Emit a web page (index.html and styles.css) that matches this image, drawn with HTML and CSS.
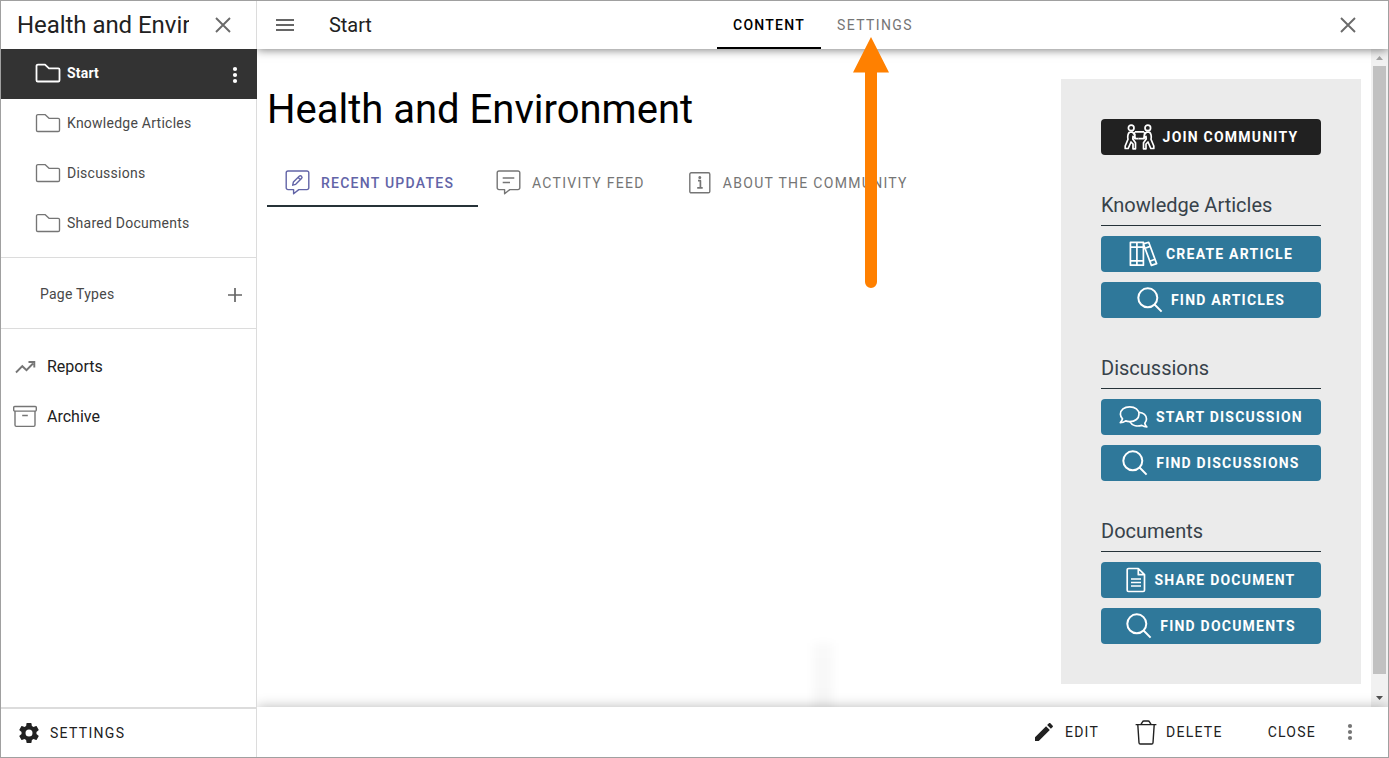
FILE: index.html
```html
<!DOCTYPE html>
<html lang="en">
<head>
<meta charset="utf-8">
<title>Health and Environment</title>
<link rel="stylesheet" href="styles.css">
</head>
<body>
<svg width="0" height="0" class="defs">
  <symbol id="folder" viewBox="0 0 26 20"><path d="M3 1.6h7l4 3.7h9.2a1.3 1.3 0 0 1 1.3 1.3v10.6a1.3 1.3 0 0 1-1.3 1.3H2.8a1.3 1.3 0 0 1-1.3-1.3V3a1.4 1.4 0 0 1 1.5-1.4z"/></symbol>
  <symbol id="close" viewBox="0 0 16 16"><path d="M1 1l14 14M15 1L1 15"/></symbol>
  <symbol id="search" viewBox="0 0 26 26"><circle cx="10.8" cy="10.8" r="9.5"/><path d="M17.3 17.3l7.3 7.3"/></symbol>
  <symbol id="dots" viewBox="0 0 6 18"><circle cx="3" cy="3" r="2.1"/><circle cx="3" cy="9" r="2.1"/><circle cx="3" cy="15" r="2.1"/></symbol>
</svg>
<div class="frame">
  <aside class="sidebar">
    <header class="side-head">
      <div class="side-title">Health and Environment</div>
      <svg class="line close" width="16" height="16"><use href="#close"/></svg>
    </header>
    <nav class="tree">
      <a class="node active"><svg class="line" width="26" height="20"><use href="#folder"/></svg><span>Start</span><svg class="dots" width="6" height="18"><use href="#dots"/></svg></a>
      <a class="node"><svg class="line" width="26" height="20"><use href="#folder"/></svg><span>Knowledge Articles</span></a>
      <a class="node"><svg class="line" width="26" height="20"><use href="#folder"/></svg><span>Discussions</span></a>
      <a class="node"><svg class="line" width="26" height="20"><use href="#folder"/></svg><span>Shared Documents</span></a>
    </nav>
    <div class="types"><span>Page Types</span><svg class="line" width="16" height="16" viewBox="0 0 16 16"><path d="M8 1v14M1 8h14"/></svg></div>
    <nav class="links">
      <a><svg class="line trend" width="24" height="24" viewBox="0 0 24 24"><path d="M3 18.500l6.300-6.300 4.200 4L20 9.500M15.500 8h5.800v5.500"/></svg><span>Reports</span></a>
      <a><svg class="line thin" width="24" height="22" viewBox="0 0 24 22"><rect x=".7" y="1.500" width="22.600" height="4.600" rx="1"/><path d="M2 6.100v14a1.300 1.300 0 0 0 1.300 1.300h17.400a1.300 1.300 0 0 0 1.300-1.300v-14M9.200 10.500h5.600"/></svg><span>Archive</span></a>
    </nav>
    <footer class="side-foot">
      <svg width="24" height="24" viewBox="0 0 24 24"><path d="M12 15.5A3.5 3.5 0 0 1 8.5 12 3.5 3.5 0 0 1 12 8.5a3.5 3.5 0 0 1 3.5 3.5 3.5 3.5 0 0 1-3.5 3.5m7.43-2.53c.04-.32.07-.64.07-.97s-.03-.66-.07-1l2.11-1.63c.19-.15.24-.42.12-.64l-2-3.46c-.12-.22-.39-.31-.61-.22l-2.49 1c-.52-.39-1.06-.73-1.69-.98l-.37-2.65A.506.506 0 0 0 14 2h-4c-.25 0-.46.18-.5.42l-.37 2.65c-.63.25-1.17.59-1.69.98l-2.49-1c-.22-.09-.49 0-.61.22l-2 3.46c-.13.22-.07.49.12.64L4.57 11c-.04.34-.07.67-.07 1s.03.65.07.97l-2.11 1.66c-.19.15-.25.42-.12.64l2 3.46c.12.22.39.3.61.22l2.49-1.01c.52.4 1.06.74 1.69.99l.37 2.65c.04.24.25.42.5.42h4c.25 0 .46-.18.5-.42l.37-2.65c.63-.26 1.17-.59 1.69-.99l2.49 1.01c.22.08.49 0 .61-.22l2-3.46c.12-.22.07-.49-.12-.64z"/></svg>
      <span>SETTINGS</span>
    </footer>
  </aside>
  <main class="main">
    <header class="topbar">
      <svg class="line menu" width="18" height="14" viewBox="0 0 18 14"><path d="M0 2h18M0 7h18M0 12h18"/></svg>
      <span class="page-name">Start</span>
      <nav class="modes"><a class="mode current">CONTENT</a><a class="mode">SETTINGS</a></nav>
      <svg class="line close" width="16" height="16"><use href="#close"/></svg>
    </header>
    <div class="body">
      <section class="content">
        <h1>Health and Environment</h1>
        <nav class="tabs">
          <a class="tab selected"><svg class="line thin" width="25" height="25" viewBox="0 0 25 25"><path d="M3 1h19a1.8 1.8 0 0 1 1.8 1.8v15A1.8 1.8 0 0 1 22 19.6h-8.2L8.6 23.8v-4.2H3a1.8 1.8 0 0 1-1.8-1.8v-15A1.8 1.8 0 0 1 3 1z"/><path d="M7.700 15.200l.7-3.200 5.800-5.800a1.600 1.600 0 0 1 2.300 2.300l-5.800 5.800zM13 7.300l2.400 2.400"/></svg><span>RECENT UPDATES</span></a>
          <a class="tab"><svg class="line thin" width="25" height="25" viewBox="0 0 25 25"><path d="M3 1h19a1.8 1.8 0 0 1 1.8 1.8v15A1.8 1.8 0 0 1 22 19.6h-8.2L8.6 23.8v-4.2H3a1.8 1.8 0 0 1-1.8-1.8v-15A1.8 1.8 0 0 1 3 1z"/><path d="M6.700 8h11.600M6.700 12.500h7.300"/></svg><span>ACTIVITY FEED</span></a>
          <a class="tab info"><svg class="line thin" width="22" height="22" viewBox="0 0 22 22"><rect x=".8" y=".8" width="20" height="20" rx="1.4"/><path d="M9 8.700h2.400v6.900M8.200 15.900h5.500" stroke-width="1.7"/><circle cx="10.800" cy="5.600" r=".8" fill="currentColor"/></svg><span>ABOUT THE COMMUNITY</span></a>
        </nav>
      </section>
      <aside class="panel">
        <a class="btn dark"><svg class="line join" width="31" height="26" viewBox="0 0 31 26"><circle cx="7.2" cy="3.9" r="2.8"/><path d="M5.5 8.2c-1.400 1-2.300 4.500-1.500 7L1.200 22v2.500h3L7 18l2 2v4.800h2.500V18.700L8.800 15l.2-2.600 2.200 2.300h3.300M5.500 8.200h3l2.800 3.300M11 7.800h9"/><circle cx="23.800" cy="3.900" r="2.800"/><path d="M25.500 8.200c1.400 1 2.300 4.500 1.500 7l2.800 6.800v2.500h-3L24 18l-2 2v4.800h-2.500V18.700L22.200 15l-.2-2.600-2.200 2.300h-5.300M25.500 8.200h-3l-2.800 3.300M11.200 14.700l-1-6.900M19.800 14.700l1-6.900"/></svg><span>JOIN COMMUNITY</span></a>
        <h2>Knowledge Articles</h2>
        <a class="btn"><svg class="line" width="29" height="26" viewBox="0 0 29 26"><path d="M1.4 1.4h13v22.8h-13zM7.900 1.400v22.800M1.400 6.200h13M1.400 19.800h13M14.400 2.900l5.300-1.600 7.900 21.300-5.200 1.800-7.900-21.200M16 7.200l5.200-1.800M20.800 20.200l5.200-1.900"/></svg><span>CREATE ARTICLE</span></a>
        <a class="btn"><svg class="line glass" width="26" height="26"><use href="#search"/></svg><span>FIND ARTICLES</span></a>
        <h2>Discussions</h2>
        <a class="btn"><svg class="line" width="29" height="24" viewBox="0 0 29 24"><path d="M10.700 1.800c5.500 0 9.300 3.200 9.300 7.400s-3.800 7.400-9.300 7.400c-1.500 0-2.800-.2-4-.7-1.600 1.100-3.500 1.700-5.400 1.700 1.100-1 1.900-2.500 2.200-3.800A7 7 0 0 1 1.400 9.200c0-4.200 3.800-7.400 9.300-7.400z"/><path d="M20 7.300c4.500.4 7.500 3.100 7.500 6.800 0 1.600-.7 3-1.700 4.200.3 1.300 1 2.900 2 3.700-1.800 0-3.500-.6-5-1.600-5.200 1.400-10-.1-11.900-3.800"/></svg><span>START DISCUSSION</span></a>
        <a class="btn"><svg class="line glass" width="26" height="26"><use href="#search"/></svg><span>FIND DISCUSSIONS</span></a>
        <h2>Documents</h2>
        <a class="btn"><svg class="line" width="20" height="26" viewBox="0 0 20 26"><path d="M2.500 1.500h9.800l6.200 6.200v15.500a1.300 1.300 0 0 1-1.300 1.300H2.500a1.300 1.300 0 0 1-1.300-1.300V2.800a1.300 1.300 0 0 1 1.300-1.300zM12.300 1.500v6.200h6.200M5 12h10M5 15.500h10M5 19h10"/></svg><span>SHARE DOCUMENT</span></a>
        <a class="btn"><svg class="line glass" width="26" height="26"><use href="#search"/></svg><span>FIND DOCUMENTS</span></a>
      </aside>
      <div class="scrollbar">
        <svg width="7" height="4" viewBox="0 0 7 4"><path d="M3.500 0L7 4H0z" fill="#a3a3a3"/></svg>
        <div class="thumb"></div>
        <svg width="7" height="4" viewBox="0 0 7 4"><path d="M0 0h7L3.500 4z" fill="#505050"/></svg>
      </div>
      <div class="smudge"></div>
    </div>
    <footer class="actions">
      <a class="edit"><svg width="24" height="24" viewBox="0 0 24 24"><path d="M20.710 7.040c.390-.390.390-1.040 0-1.410l-2.340-2.340c-.370-.390-1.020-.390-1.410 0l-1.840 1.830 3.750 3.750M3 17.250V21h3.750L17.810 9.930l-3.750-3.750z"/></svg><span>EDIT</span></a>
      <a class="delete"><svg class="line thin" width="22" height="25" viewBox="0 0 22 25"><path d="M.6 4.600h20.800M2.800 4.600l1.200 18.200a1.300 1.300 0 0 0 1.300 1.200h11.400a1.300 1.300 0 0 0 1.300-1.200l1.200-18.200M6 4.400l1.500-2.600a1.500 1.500 0 0 1 1.300-.8h4.400a1.500 1.500 0 0 1 1.300.8L16 4.400"/></svg><span>DELETE</span></a>
      <a class="shut"><span>CLOSE</span></a>
      <svg class="dots" width="6" height="18"><use href="#dots"/></svg>
    </footer>
  </main>
  <svg class="pointer" width="36" height="251" viewBox="0 0 36 251"><path d="M18 0l18 35.500H24V245a6 6 0 0 1-12 0V35.500H0z" fill="#ff8000"/></svg>
</div>
</body>
</html>
```
FILE: styles.css
```css
* { box-sizing: border-box; }
body { margin: 0; font-family: Roboto, "Liberation Sans", sans-serif; color: #212121; background: #fff; }
svg { display: block; flex: none; overflow: visible; }
span { white-space: nowrap; }
.defs { position: absolute; }
.line { fill: none; stroke: currentColor; stroke-width: 1.7; stroke-linejoin: round; }
.thin { stroke-width: 1.4; }
.trend { stroke-width: 1.9; stroke-linejoin: miter; }
.join { stroke-width: 1.7; }
.dots { fill: currentColor; }
.close { color: #6a6a6a; stroke-width: 1.9; }
.frame { position: relative; width: 1389px; height: 758px; border: 1px solid #a0a0a0; display: grid; grid-template-columns: 256px 1fr; overflow: hidden; }

.sidebar { display: flex; flex-direction: column; border-right: 1px solid #dcdcdc; position: relative; z-index: 2; background: #fff; height: 756px; }
.side-head { height: 48px; display: flex; align-items: center; justify-content: space-between; padding: 0 25px 0 16px; }
.side-title { width: 172px; overflow: hidden; white-space: nowrap; font-size: 24px; line-height: 32px; letter-spacing: -.05px; }
.node { display: flex; align-items: center; height: 50px; padding: 0 19px 2px 34px; font-size: 14px; letter-spacing: .25px; color: #484848; }
.node .line { color: #757575; stroke-width: 1.35; margin-right: 6px; }
.node.active { background: #333; color: #fff; font-weight: 700; margin-right: -1px; letter-spacing: .2px; }
.node.active .line { color: #fff; stroke-width: 1.8; }
.node .dots { margin: 3px 0 0 auto; }
.types { margin-top: 8px; height: 72px; border: solid #dcdcdc; border-width: 1px 0; display: flex; align-items: center; justify-content: space-between; padding: 2px 13px 0 39px; font-size: 14px; letter-spacing: .25px; color: #484848; }
.types .line { color: #666; margin-top: 2px; }
.links { margin-top: 12px; }
.links a { height: 50px; display: flex; align-items: center; gap: 10px; padding-left: 12px; font-size: 16px; }
.links svg { color: #757575; }
.side-foot { margin-top: auto; height: 50px; border-top: 2px solid #dcdcdc; display: flex; align-items: center; gap: 9px; padding-left: 16px; font-size: 14px; letter-spacing: 1.3px; }
.side-foot svg { fill: #212121; }

.main { display: grid; grid-template-rows: 48px 658px 50px; min-width: 0; }
.topbar { position: relative; z-index: 1; background: #fff; display: flex; align-items: center; padding: 0 32px 0 19px; box-shadow: 0 1px 9px rgba(0,0,0,.5); }
.menu { color: #666; stroke-width: 1.9; }
.page-name { margin-left: 35px; font-size: 20px; width: 388px; letter-spacing: -.05px; }
.modes { display: flex; height: 48px; font-size: 14px; letter-spacing: 1.37px; }
.mode { display: flex; align-items: center; padding: 0 16px; color: #757575; }
.current { color: #000; border-bottom: 2px solid #000; padding-top: 2px; width: 104px; font-weight: 500; letter-spacing: 1.25px; }
.topbar .close { margin-left: auto; }
.body { position: relative; display: flex; overflow: hidden; }
.content { flex: 1; padding: 35px 0 0 10px; }
h1 { margin: 0; font-size: 40px; line-height: 52px; font-weight: 400; color: #000; }
.tabs { display: flex; margin-top: 22px; }
.tab { display: flex; align-items: center; height: 49px; padding: 2px 23px 0 18px; gap: 11px; font-size: 14px; letter-spacing: 1.3px; color: #757575; border-bottom: 2px solid transparent; }
.selected { width: 211px; color: #6264a7; border-color: #263238; font-weight: 500; letter-spacing: 1.25px; }
.info { padding-left: 21px; gap: 12px; }
.panel { width: 300px; height: 605px; margin: 30px 10px 0 0; padding: 40px; background: #ebebeb; }
.btn { display: flex; align-items: center; justify-content: center; gap: 8px; height: 36px; margin-bottom: 10px; border-radius: 4px; background: #2f789a; color: #fff; font-size: 14px; font-weight: 700; letter-spacing: 1.22px; }
.dark { background: #212121; margin-bottom: 30px; }
.glass { stroke-width: 2; }
h2 { margin: 30px 0 10px; height: 41px; border-bottom: 1px solid #263238; font-size: 20px; line-height: 40px; font-weight: 400; color: #37424a; }
.scrollbar { width: 17px; height: 658px; background: #f1f1f1; display: flex; flex-direction: column; align-items: center; justify-content: space-between; padding: 7px 0; }
.thumb { width: 13px; height: 608px; margin-bottom: 16px; background: #c1c1c1; }
.smudge { position: absolute; left: 556px; top: 594px; width: 20px; height: 90px; background: linear-gradient(rgba(0,0,0,.025), rgba(0,0,0,.035)); filter: blur(4px); }
.actions { position: relative; background: #fff; box-shadow: 0 0 12px rgba(0,0,0,.28); display: flex; align-items: center; justify-content: flex-end; padding-right: 35px; font-size: 14px; letter-spacing: 1.25px; }
.actions a { display: flex; align-items: center; }
.edit { gap: 9px; }
.edit svg { fill: #212121; }
.delete { gap: 9px; margin-left: 36px; }
.shut { margin-left: 45px; }
.actions .dots { color: #757575; margin-left: 31px; }
.pointer { position: absolute; left: 852px; top: 36px; z-index: 5; }
```
